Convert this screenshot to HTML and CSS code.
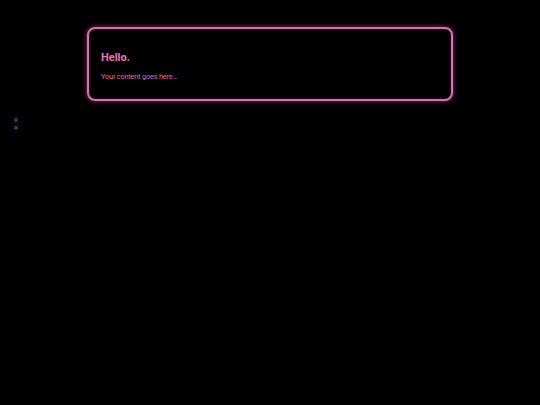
FILE: index.html
```html
<!DOCTYPE html>
<html>
<head>
<meta charset="utf-8">
<link rel="stylesheet" href="styles.css">
</head>
<body>
<div class="wrap">
  <div class="card">
    <h1 class="title">Hello.</h1>
    <p class="text">Your content goes here...</p>
  </div>
</div>
<div class="marks">
  <span class="mark">×</span>
  <span class="mark">×</span>
</div>
</body>
</html>
```
FILE: styles.css
```css
html, body {
  margin: 0;
  padding: 0;
  background: #000;
}
body {
  font-family: Roboto, "Noto Sans", sans-serif;
}
.wrap {
  padding-top: 27px;
  display: flex;
  justify-content: center;
}
.card {
  width: 366px;
  height: 74px;
  box-sizing: border-box;
  border: 2px solid #d872b0;
  border-radius: 8px;
  box-shadow: 0 0 4px 1px rgba(220, 80, 160, 0.45), inset 0 0 3px rgba(220, 80, 160, 0.35);
  padding: 22px 12px 0 12px;
}
.title {
  margin: 0;
  font-size: 11px;
  font-weight: 700;
  color: #ee72b4;
  line-height: 14px;
}
.text {
  margin: 7px 0 0 0;
  font-size: 7.4px;
  letter-spacing: -0.2px;
  color: #de6eae;
  line-height: 10px;
}
.marks {
  margin-top: 15px;
  padding-left: 13px;
  display: flex;
  flex-direction: column;
  align-items: flex-start;
}
.mark {
  font-family: "DejaVu Sans", sans-serif;
  font-size: 7px;
  line-height: 8px;
  color: #c86aa8;
}
```
